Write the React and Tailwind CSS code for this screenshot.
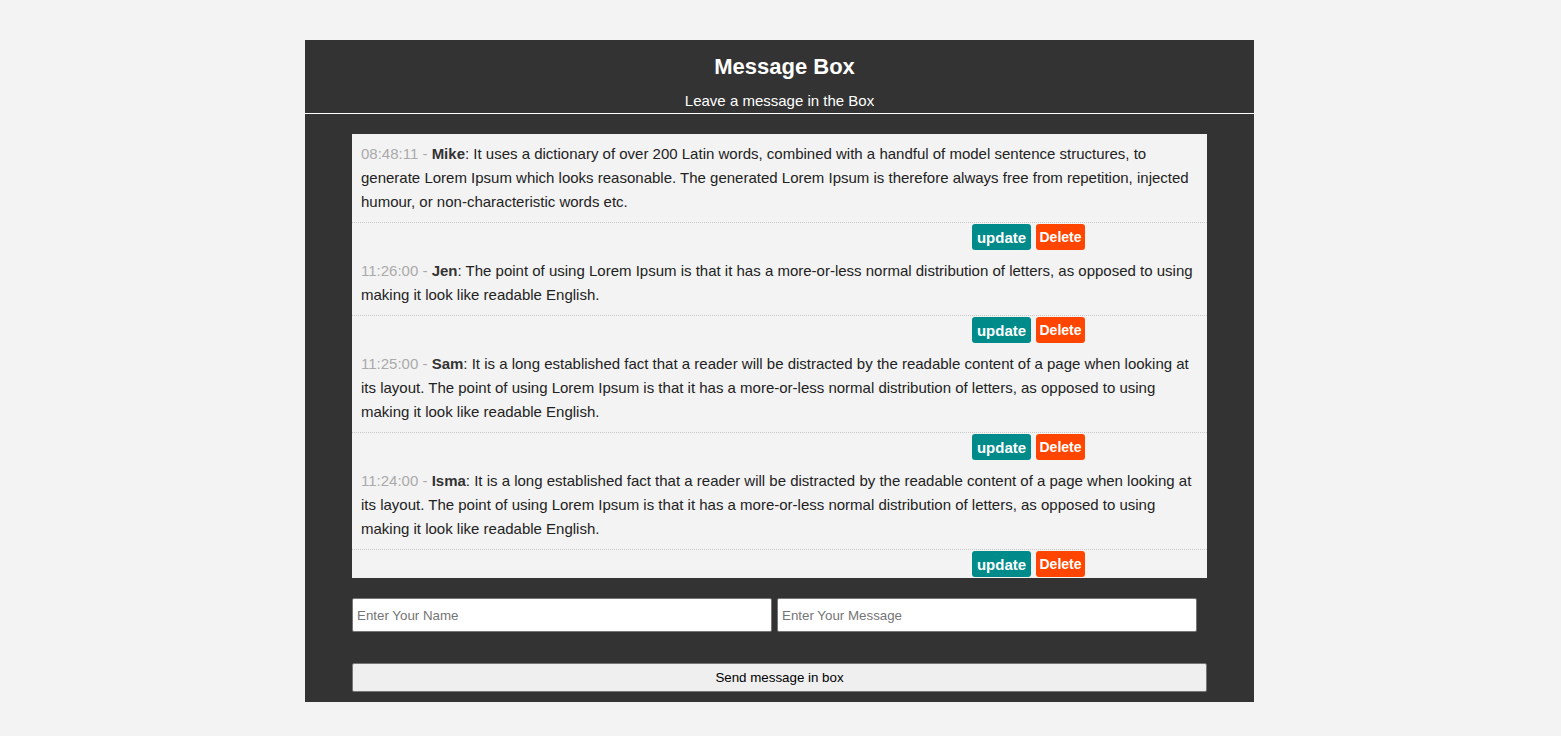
import React from "react";

const messages = [
  {
    time: "08:48:11",
    name: "Mike",
    text: "It uses a dictionary of over 200 Latin words, combined with a handful of model sentence structures, to generate Lorem Ipsum which looks reasonable. The generated Lorem Ipsum is therefore always free from repetition, injected humour, or non-characteristic words etc.",
  },
  {
    time: "11:26:00",
    name: "Jen",
    text: "The point of using Lorem Ipsum is that it has a more-or-less normal distribution of letters, as opposed to using making it look like readable English.",
  },
  {
    time: "11:25:00",
    name: "Sam",
    text: "It is a long established fact that a reader will be distracted by the readable content of a page when looking at its layout. The point of using Lorem Ipsum is that it has a more-or-less normal distribution of letters, as opposed to using making it look like readable English.",
  },
  {
    time: "11:24:00",
    name: "Isma",
    text: "It is a long established fact that a reader will be distracted by the readable content of a page when looking at its layout. The point of using Lorem Ipsum is that it has a more-or-less normal distribution of letters, as opposed to using making it look like readable English.",
  },
];

function Message({ msg }) {
  return (
    <div>
      <div className="px-[9px] pt-[8px] pb-[8px] text-[15px] leading-[24px] text-[#222] border-b border-dotted border-[#c8c8c8]">
        <span className="text-[#aaa]">{msg.time} - </span>
        <b className="text-[#333]">{msg.name}</b>: {msg.text}
      </div>
      <div className="flex gap-[5px] pl-[620px] py-[1px]">
        <button className="w-[59px] h-[26px] rounded-[3px] bg-[#008b8b] text-white font-bold text-[15px] leading-none">
          update
        </button>
        <button className="w-[49px] h-[26px] rounded-[3px] bg-[#ff4500] text-white font-bold text-[14px] leading-none">
          Delete
        </button>
      </div>
    </div>
  );
}

export default function App() {
  return (
    <div className="min-h-screen bg-[#f3f3f3] pt-[40px] font-['Liberation_Sans',Arial,sans-serif]">
      <div className="ml-[305px] w-[949px] bg-[#333] pb-[10px]">
        <div className="text-center text-white border-b border-white pb-[4px]">
          <h1 className="pt-[14px] pl-[10px] text-[22px] leading-[26px] font-bold">Message Box</h1>
          <p className="mt-[12px] text-[15px] leading-[17px]">Leave a message in the Box</p>
        </div>

        <div className="mx-[47px] mt-[20px] bg-[#f3f3f3]">
          {messages.map((m, i) => (
            <Message key={i} msg={m} />
          ))}
        </div>

        <div className="mx-[47px] mt-[20px] flex gap-[5px]">
          <input
            className="w-[420px] h-[34px] bg-white border border-[#767676] rounded-[2px] px-[4px] text-[13.33px] placeholder:text-[#757575] outline-none"
            placeholder="Enter Your Name"
          />
          <input
            className="w-[420px] h-[34px] bg-white border border-[#767676] rounded-[2px] px-[4px] text-[13.33px] placeholder:text-[#757575] outline-none"
            placeholder="Enter Your Message"
          />
        </div>

        <div className="mx-[47px] mt-[31px]">
          <button className="w-full h-[29px] bg-[#efefef] border border-[#767676] rounded-[2px] text-[13.33px] text-black">
            Send message in box
          </button>
        </div>
      </div>
    </div>
  );
}
